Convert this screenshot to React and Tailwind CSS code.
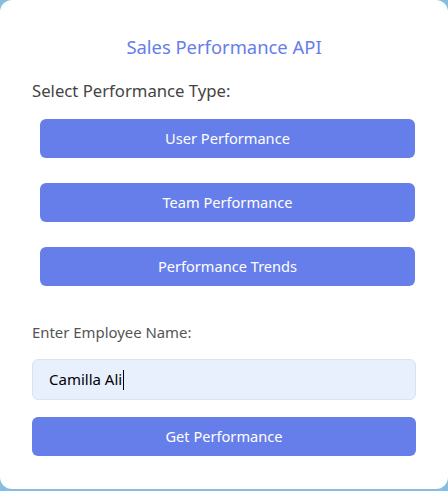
export default function App() {
  const types = ["User Performance", "Team Performance", "Performance Trends"];

  return (
    <div className="min-h-[491px] w-[448px] bg-[#86bee3]" style={{ fontFamily: '"Noto Sans", "Open Sans", sans-serif' }}>
      <div className="h-[489px] w-full rounded-[12px] bg-white px-8 pt-[33px]">
        <h2 className="text-center text-[18.4px] leading-[27px] text-[#667eea]">Sales Performance API</h2>

        <p className="mt-[19px] text-[16.7px] leading-[24px] text-[#444]">Select Performance Type:</p>

        <div className="mt-[16px] flex flex-col gap-[25px]">
          {types.map((t) => (
            <button
              key={t}
              className="ml-2 h-[39px] w-[375px] rounded-[6px] bg-[#667eea] text-[14.6px] text-white"
            >
              {t}
            </button>
          ))}
        </div>

        <label className="mt-[36px] block text-[14.9px] leading-[20px] text-[#555]">Enter Employee Name:</label>

        <div className="mt-[17px] flex h-[41px] items-center rounded-[6px] border border-[#dde3ee] bg-[#e8f0fe] px-4 text-[15px] text-black">
          Camilla Ali
          <span className="ml-px inline-block h-[20px] w-px bg-black" />
        </div>

        <button className="mt-[17px] h-[39px] w-full rounded-[6px] bg-[#667eea] text-[14.6px] text-white">
          Get Performance
        </button>
      </div>
    </div>
  );
}
